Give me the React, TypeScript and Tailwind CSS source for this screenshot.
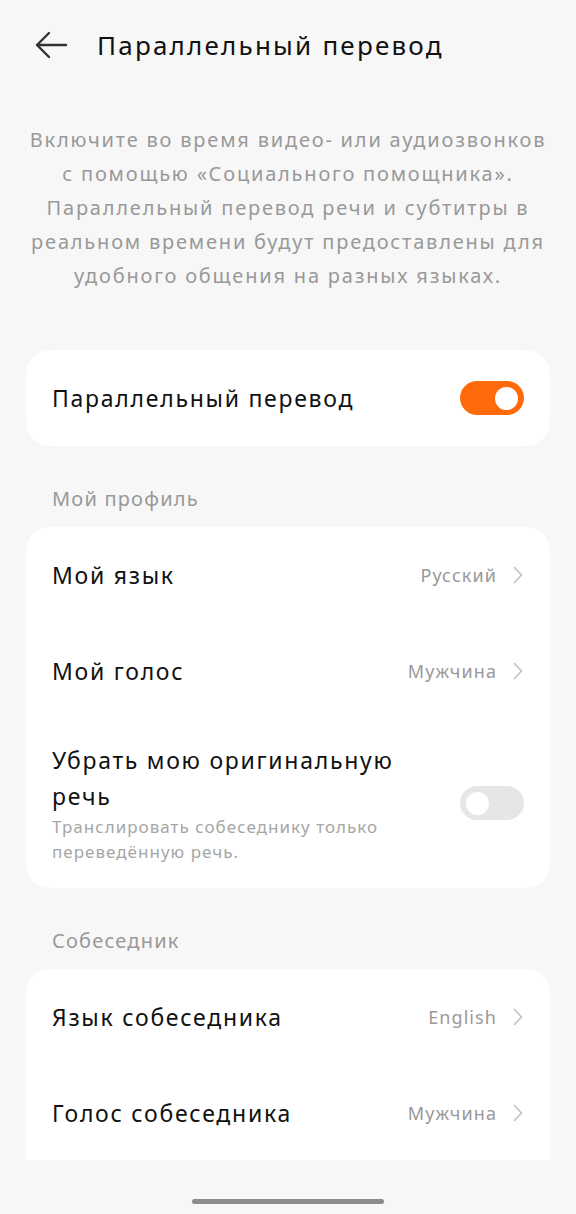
import React from "react";

interface RowProps {
  title: string;
  value: string;
}

const font = { fontFamily: '"Noto Sans", "Open Sans", sans-serif' };

const Chevron: React.FC = () => (
  <svg width="12" height="20" viewBox="0 0 12 20" fill="none" className="ml-[15px]">
    <path d="M2.5 2.5l7 7.5-7 7.5" stroke="#c4c4c4" strokeWidth="1.8" strokeLinecap="round" strokeLinejoin="round" />
  </svg>
);

const Toggle: React.FC<{ on?: boolean }> = ({ on }) => (
  <div
    className={
      on
        ? "w-[64px] h-[34px] rounded-full bg-[#ff6a0a] flex items-center justify-end px-[6px] shrink-0"
        : "w-[64px] h-[34px] rounded-full bg-[#e6e6e6] flex items-center justify-start px-[6px] shrink-0"
    }
  >
    <div className="w-[23px] h-[23px] rounded-full bg-white" />
  </div>
);

const NavRow: React.FC<RowProps> = ({ title, value }) => (
  <div className="h-[96px] flex items-center justify-between px-[26px]">
    <p className="text-[23px] tracking-[0.075em] text-[#111]">{title}</p>
    <div className="flex items-center">
      <span className="text-[18px] tracking-[0.06em] text-[#999]">{value}</span>
      <Chevron />
    </div>
  </div>
);

const SectionLabel: React.FC<{ text: string }> = ({ text }) => (
  <p className="pt-[39px] pb-[14px] px-[26px] text-[20px] tracking-[0.06em] leading-[28px] text-[#999]">{text}</p>
);

const App: React.FC = () => {
  return (
    <div style={font} className="w-[576px] h-[1214px] bg-[#f7f7f7] flex flex-col overflow-hidden">
      <div className="h-[90px] flex items-center pl-[34px] shrink-0">
        <svg width="34" height="30" viewBox="0 0 34 30" fill="none">
          <path d="M32 15H3M15 3L3 15l12 12" stroke="#333" strokeWidth="2.4" strokeLinecap="round" strokeLinejoin="round" />
        </svg>
        <h1 className="ml-[29px] text-[26px] tracking-[0.085em] text-[#111]">Параллельный перевод</h1>
      </div>

      <div className="flex-1 overflow-hidden px-[26px]">
        <p className="mt-[33px] text-center text-[20px] tracking-[0.09em] leading-[34px] text-[#999]">
          Включите во время видео- или аудиозвонков с помощью «Социального помощника». Параллельный перевод речи и
          субтитры в реальном времени будут предоставлены для удобного общения на разных языках.
        </p>

        <div className="mt-[57px] bg-white rounded-[24px] h-[96px] flex items-center justify-between px-[26px]">
          <p className="text-[23px] tracking-[0.075em] text-[#111]">Параллельный перевод</p>
          <Toggle on />
        </div>

        <SectionLabel text="Мой профиль" />
        <div className="bg-white rounded-[24px]">
          <NavRow title="Мой язык" value="Русский" />
          <NavRow title="Мой голос" value="Мужчина" />
          <div className="flex items-center justify-between px-[26px] pt-[23px] pb-[24px]">
            <div className="w-[370px]">
              <p className="text-[23px] tracking-[0.075em] leading-[36px] text-[#111]">Убрать мою оригинальную речь</p>
              <p className="text-[17px] tracking-[0.06em] leading-[25px] text-[#a6a6a6]">
                Транслировать собеседнику только переведённую речь.
              </p>
            </div>
            <Toggle />
          </div>
        </div>

        <SectionLabel text="Собеседник" />
        <div className="bg-white rounded-t-[24px]">
          <NavRow title="Язык собеседника" value="English" />
          <NavRow title="Голос собеседника" value="Мужчина" />
        </div>
      </div>

      <div className="h-[54px] shrink-0 flex items-end justify-center pb-[10px]">
        <div className="w-[192px] h-[5px] rounded-full bg-[#8c8c8c]" />
      </div>
    </div>
  );
};

export default App;
